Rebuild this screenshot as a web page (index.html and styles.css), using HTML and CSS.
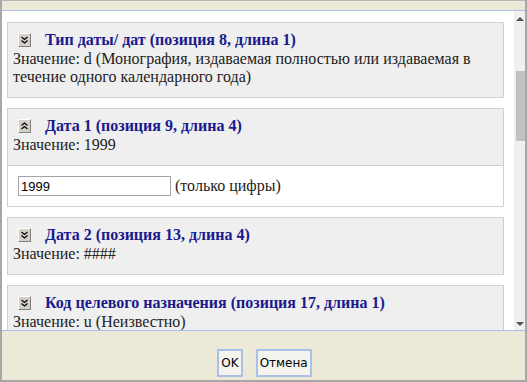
FILE: index.html
```html
<!DOCTYPE html>
<html lang="ru">
<head>
    <meta charset="UTF-8">
    <title>Поля 008</title>
    <link rel="stylesheet" href="styles.css">
</head>
<body>
<div class="dialog">
    <div class="topbar"></div>

    <div class="main">
        <div class="fields">
            <div class="field">
                <div class="field-head">
                    <div class="field-title">
                        <span class="toggle-btn">
                            <svg width="7" height="8" viewBox="0 0 7 8"><path d="M0.5 1 L3.5 3.5 L6.5 1 M0.5 4.5 L3.5 7 L6.5 4.5" fill="none" stroke="#000" stroke-width="1.2"/></svg>
                        </span>
                        <span class="title-text">Тип даты/ дат (позиция 8, длина 1)</span>
                    </div>
                    <div class="field-value">Значение: d (Монография, издаваемая полностью или издаваемая в течение одного календарного года)</div>
                </div>
            </div>

            <div class="field">
                <div class="field-head">
                    <div class="field-title">
                        <span class="toggle-btn">
                            <svg width="7" height="8" viewBox="0 0 7 8"><path d="M0.5 3.5 L3.5 1 L6.5 3.5 M0.5 7 L3.5 4.5 L6.5 7" fill="none" stroke="#000" stroke-width="1.2"/></svg>
                        </span>
                        <span class="title-text">Дата 1 (позиция 9, длина 4)</span>
                    </div>
                    <div class="field-value">Значение: 1999</div>
                </div>
                <div class="field-edit">
                    <input type="text" class="field-input" value="1999">
                    <span class="hint">(только цифры)</span>
                </div>
            </div>

            <div class="field">
                <div class="field-head">
                    <div class="field-title">
                        <span class="toggle-btn">
                            <svg width="7" height="8" viewBox="0 0 7 8"><path d="M0.5 1 L3.5 3.5 L6.5 1 M0.5 4.5 L3.5 7 L6.5 4.5" fill="none" stroke="#000" stroke-width="1.2"/></svg>
                        </span>
                        <span class="title-text">Дата 2 (позиция 13, длина 4)</span>
                    </div>
                    <div class="field-value">Значение: ####</div>
                </div>
            </div>

            <div class="field">
                <div class="field-head">
                    <div class="field-title">
                        <span class="toggle-btn">
                            <svg width="7" height="8" viewBox="0 0 7 8"><path d="M0.5 1 L3.5 3.5 L6.5 1 M0.5 4.5 L3.5 7 L6.5 4.5" fill="none" stroke="#000" stroke-width="1.2"/></svg>
                        </span>
                        <span class="title-text">Код целевого назначения (позиция 17, длина 1)</span>
                    </div>
                    <div class="field-value">Значение: u (Неизвестно)</div>
                </div>
            </div>
        </div>

        <!-- полоса прокрутки -->
        <div class="scrollbar">
            <div class="arrow arrow-up"></div>
            <div class="track"><div class="thumb"></div></div>
            <div class="arrow arrow-down"></div>
        </div>
    </div>

    <div class="footer">
        <button class="btn">OK</button>
        <button class="btn">Отмена</button>
    </div>
</div>
</body>
</html>
```

FILE: styles.css
```css
body {
    margin: 0;
    font-family: 'Liberation Serif', serif;
}
.dialog {
    width: 527px;
    height: 382px;
    box-sizing: border-box;
    border: 2px solid #a7a7a7;
    border-top: 1px solid #b5b5b5;
    background-color: #ece9d8;
    display: flex;
    flex-direction: column;
}
.topbar {
    height: 9px;
    background-color: #ece9d8;
    border-bottom: 1px solid #a9c1e6;
}
.main {
    height: 319px;
    display: flex;
    background-color: #fff;
    border-bottom: 1px solid #a9c1e6;
    overflow: hidden;
}
.fields {
    flex: 1;
    padding: 11px 10px 0 5px;
    overflow: hidden;
}
.field {
    border: 1px solid #d4d0c8;
    background-color: #efefef;
    margin-bottom: 10px;
}
.field-head {
    padding: 9px 5px 11px 5px;
}
.field-title {
    display: flex;
    align-items: center;
    height: 16px;
    padding-left: 5px;
}
.toggle-btn {
    width: 11px;
    height: 12px;
    background-color: #d4d0c8;
    border: 1px solid;
    border-color: #fff #808080 #808080 #fff;
    display: flex;
    align-items: center;
    justify-content: center;
}
.title-text {
    margin-left: 14px;
    font-weight: bold;
    font-size: 16px;
    color: #1a1a8c;
}
.field-value {
    margin-top: 2px;
    font-size: 16px;
    line-height: 18px;
    color: #222;
}
.field-edit {
    background-color: #fff;
    border-top: 1px solid #d4d0c8;
    padding: 10px 10px 10px 10px;
    display: flex;
    align-items: center;
}
.field-input {
    width: 147px;
    height: 16px;
    margin: 0;
    padding: 1px 2px;
    border: 1px solid #a5a5a5;
    font-family: 'Liberation Sans', sans-serif;
    font-size: 13px;
}
.hint {
    margin-left: 4px;
    font-size: 16px;
    color: #222;
}
.scrollbar {
    width: 11px;
    background-color: #f0f0f0;
    display: flex;
    flex-direction: column;
}
.arrow {
    height: 16px;
    position: relative;
}
.arrow-up::after, .arrow-down::after {
    content: "";
    position: absolute;
    left: 2px;
    border-left: 4px solid transparent;
    border-right: 4px solid transparent;
}
.arrow-up::after {
    top: 6px;
    border-bottom: 4px solid #555;
}
.arrow-down::after {
    bottom: 4px;
    border-top: 4px solid #555;
}
.track {
    flex: 1;
}
.thumb {
    margin-top: 44px;
    margin-left: 2px;
    height: 70px;
    background-color: #c1c1c1;
}
.footer {
    flex: 1;
    display: flex;
    justify-content: center;
    align-items: flex-start;
    gap: 13px;
    padding-top: 18px;
    padding-left: 2px;
}
.btn {
    height: 28px;
    padding: 0 2px;
    background-color: #f4f3ee;
    border: 2px solid #a9c1e6;
    font-family: 'DejaVu Sans', sans-serif;
    font-size: 12px;
    color: #000;
}
```
